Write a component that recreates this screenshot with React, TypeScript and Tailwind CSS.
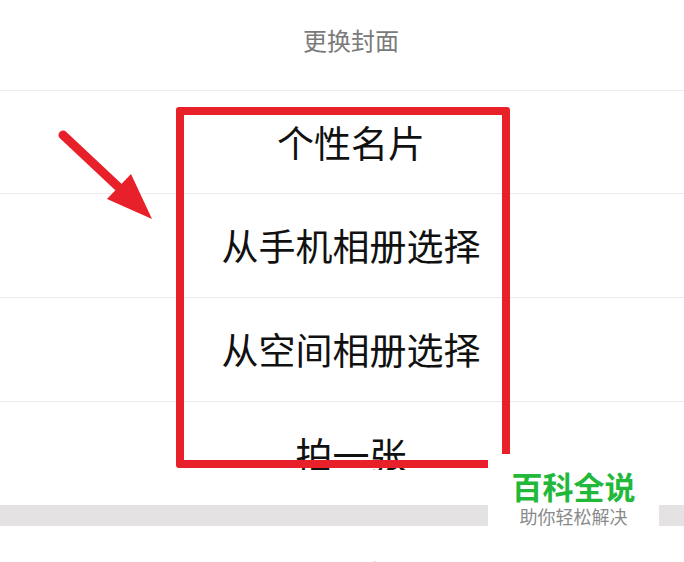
const FONT = '"Noto Sans CJK SC", "Noto Sans", sans-serif'

function SheetRow({ label, divider = true }: { label: string; divider?: boolean }) {
  return (
    <div className={`flex h-[104px] items-center justify-center pl-[18px] ${divider ? 'border-t border-[#ebebeb]' : ''}`}>
      <span className="text-[37px] leading-none text-[#111]">{label}</span>
    </div>
  )
}

export default function App() {
  return (
    <div className="relative h-[562px] w-[684px] overflow-hidden bg-white" style={{ fontFamily: FONT }}>
      {/* action sheet */}
      <div className="flex flex-col">
        <div className="flex h-[90px] items-center justify-center pb-[11px] pl-[18px]">
          <span className="text-[24px] leading-none text-[#7a7a7a]">更换封面</span>
        </div>
        <SheetRow label="个性名片" />
        <div className="-mt-px">
          <SheetRow label="从手机相册选择" />
        </div>
        <SheetRow label="从空间相册选择" />
        <div className="h-[69px] overflow-hidden border-t border-[#ebebeb]">
          <div className="flex h-[104px] items-center justify-center pl-[18px]">
            <span className="text-[37px] leading-none text-[#111]">拍一张</span>
          </div>
        </div>
        <div className="h-[35px] bg-white" />
        <div className="h-[21px] bg-[#e4e2e3]" />
        <div className="flex h-[36px] items-start justify-center overflow-hidden pl-[18px] pt-[33px]">
          <span className="text-[37px] leading-none text-[#e4e4e4]">取消</span>
        </div>
      </div>

      {/* red highlight box */}
      <div className="absolute left-[176px] top-[107px] h-[361px] w-[334px] rounded-[3px] border-[8px] border-[#e8202a]" />

      {/* arrow */}
      <svg className="absolute left-0 top-0" width="684" height="562" viewBox="0 0 684 562">
        <line x1="63" y1="135" x2="128" y2="196" stroke="#e8202a" strokeWidth="9" strokeLinecap="round" />
        <polygon points="152,219 131,174 107,199" fill="#e8202a" />
      </svg>

      {/* watermark */}
      <div className="absolute left-[488px] top-[454px] flex h-[83px] w-[171px] flex-col items-center bg-white pt-[16px]">
        <span className="text-[31px] font-bold leading-none text-[#22b83a]">百科全说</span>
        <span className="mt-[6px] text-[18px] leading-none text-[#8a8a8a]">助你轻松解决</span>
      </div>
    </div>
  )
}
